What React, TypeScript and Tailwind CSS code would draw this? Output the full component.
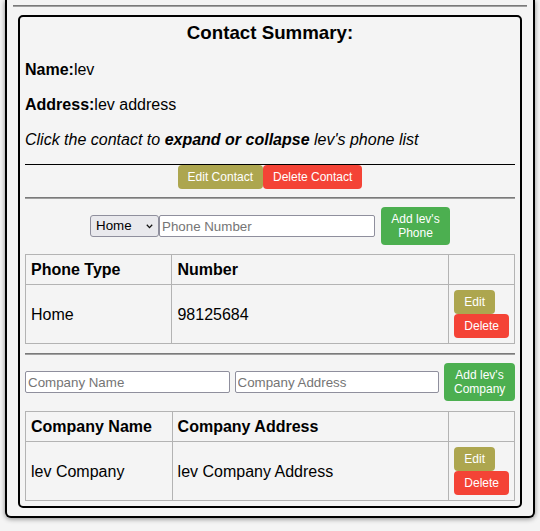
import React from 'react';

const font = { fontFamily: '"Liberation Sans", Arial, sans-serif' };

function Btn({ color, className, children }: { color: 'olive' | 'red' | 'green'; className?: string; children: React.ReactNode }) {
  const bg =
    color === 'olive' ? 'bg-[#ada64f]' : color === 'red' ? 'bg-[#f44336]' : 'bg-[#4caf50]';
  return (
    <button
      type="button"
      className={`${bg} text-white text-[12px] leading-[14px] py-[5px] px-[10px] rounded-[4px] ${className ?? ''}`}
    >
      {children}
    </button>
  );
}

function RowActions() {
  return (
    <div className="flex flex-col items-start">
      <Btn color="olive">Edit</Btn>
      <Btn color="red">Delete</Btn>
    </div>
  );
}

function DataTable({ head, row }: { head: [string, string]; row: [string, string] }) {
  return (
    <table className="w-full border-collapse text-[16px] text-black">
      <thead>
        <tr>
          <th className="w-[147px] border border-[#b3b3b3] px-[5px] py-[5px] leading-[19px] text-left font-bold">{head[0]}</th>
          <th className="w-[278px] border border-[#b3b3b3] px-[5px] py-[5px] leading-[19px] text-left font-bold">{head[1]}</th>
          <th className="border border-[#b3b3b3] px-[5px] py-[5px]"></th>
        </tr>
      </thead>
      <tbody>
        <tr>
          <td className="border border-[#b3b3b3] px-[5px] py-[5px] leading-[19px] align-middle">{row[0]}</td>
          <td className="border border-[#b3b3b3] px-[5px] py-[5px] leading-[19px] align-middle">{row[1]}</td>
          <td className="border border-[#b3b3b3] px-[5px] py-[5px] align-middle">
            <RowActions />
          </td>
        </tr>
      </tbody>
    </table>
  );
}

const inputCls =
  'h-[22px] bg-white border border-[#8f8f9d] rounded-[2px] px-[2px] text-[13.33px] text-black placeholder:text-[#757575] outline-none';

export default function App() {
  return (
    <div className="min-h-[531px] bg-[#f4f4f4] pb-[10px]" style={font}>
      <div className="ml-[5px] w-[530px] border-x-2 border-b-2 border-black rounded-b-[6px] px-[6px] pt-[5px] pb-[8px] bg-[#f4f4f4] shadow-[0_1px_5px_rgba(0,0,0,0.45)]">
        <hr className="border-0 border-t border-t-[#7a7a7a] border-b border-b-[#a0a0a0] m-0" />
        <div className="mt-[8px] mx-[5px] border-2 border-black rounded-[5px] p-[5px] text-black">
          <h3 className="text-center text-[18.72px] leading-[22px] font-bold mb-[16px]">Contact Summary:</h3>
          <p className="text-[16px] leading-[19px] mb-[16px]">
            <b>Name:</b>lev
          </p>
          <p className="text-[16px] leading-[19px] mb-[16px]">
            <b>Address:</b>lev address
          </p>
          <p className="text-[16px] leading-[19px] italic mb-[15px]">
            Click the contact to <b>expand or collapse</b> lev's phone list
          </p>
          <hr className="border-0 border-t border-black m-0" />
          <div className="flex justify-center">
            <Btn color="olive">Edit Contact</Btn>
            <Btn color="red">Delete Contact</Btn>
          </div>
          <hr className="mt-[8px] border-0 border-t border-t-[#7a7a7a] border-b border-b-[#a0a0a0]" />

          <div className="mt-[8px] flex items-center justify-center">
            <span className="relative inline-flex">
              <select
                defaultValue="Home"
                className="appearance-none w-[69px] h-[22px] bg-[#e9e9ed] border border-[#8f8f9d] rounded-[3px] pl-[5px] text-[13.33px] text-black outline-none"
              >
                <option>Home</option>
                <option>Work</option>
                <option>Mobile</option>
              </select>
              <svg
                className="pointer-events-none absolute right-[6px] top-[9px]"
                width="7"
                height="5"
                viewBox="0 0 7 5"
                fill="none"
              >
                <path d="M0.8 0.8 L3.5 3.6 L6.2 0.8" stroke="#111" strokeWidth="1.3" />
              </svg>
            </span>
            <input className={`${inputCls} w-[216px]`} placeholder="Phone Number" />
            <Btn color="green" className="ml-[6px] w-[69px]">
              Add lev's Phone
            </Btn>
          </div>

          <div className="mt-[9px]">
            <DataTable head={['Phone Type', 'Number']} row={['Home', '98125684']} />
          </div>

          <hr className="mt-[9px] border-0 border-t border-t-[#7a7a7a] border-b border-b-[#a0a0a0]" />

          <div className="mt-[8px] flex items-center gap-[5px]">
            <input className={`${inputCls} flex-1 min-w-0`} placeholder="Company Name" />
            <input className={`${inputCls} flex-1 min-w-0`} placeholder="Company Address" />
            <Btn color="green" className="w-[71px] shrink-0">
              Add lev's Company
            </Btn>
          </div>

          <div className="mt-[10px]">
            <DataTable head={['Company Name', 'Company Address']} row={['lev Company', 'lev Company Address']} />
          </div>
        </div>
      </div>
    </div>
  );
}
